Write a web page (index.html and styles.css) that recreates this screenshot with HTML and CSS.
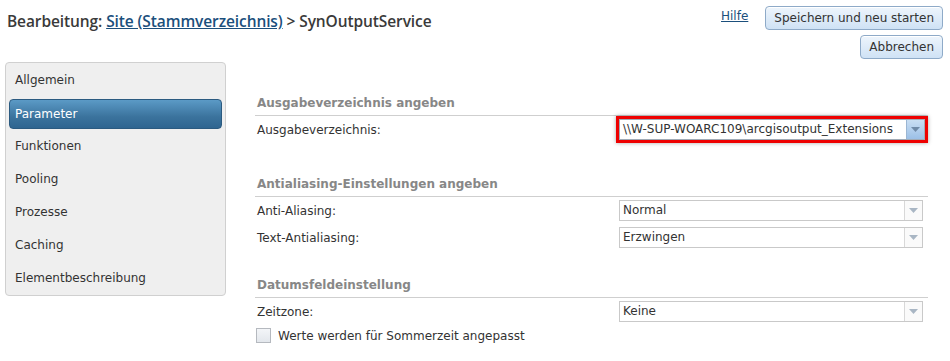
FILE: index.html
```html
<!DOCTYPE html>
<html lang="de">
<head>
<meta charset="utf-8">
<title>Bearbeitung</title>
<link rel="stylesheet" href="styles.css">
</head>
<body>
<header class="top">
  <h1 class="title">Bearbeitung: <a href="#" class="crumb">Site (Stammverzeichnis)</a> &gt; SynOutputService</h1>
  <div class="actions">
    <div class="actions-row">
      <a href="#" class="help">Hilfe</a>
      <button class="btn">Speichern und neu starten</button>
    </div>
    <div class="actions-row">
      <button class="btn">Abbrechen</button>
    </div>
  </div>
</header>
<div class="layout">
  <nav class="side">
    <div class="nav-item">Allgemein</div>
    <div class="nav-item active">Parameter</div>
    <div class="nav-item">Funktionen</div>
    <div class="nav-item">Pooling</div>
    <div class="nav-item">Prozesse</div>
    <div class="nav-item">Caching</div>
    <div class="nav-item">Elementbeschreibung</div>
  </nav>
  <main class="content">
    <section class="group first">
      <h2 class="group-title">Ausgabeverzeichnis angeben</h2>
      <div class="row">
        <span class="label">Ausgabeverzeichnis:</span>
        <div class="select combo">
          <span class="value">\\W-SUP-WOARC109\arcgisoutput_Extensions</span>
          <span class="arrow blue"><svg width="9" height="5" viewBox="0 0 9 5"><path d="M0 0H9L4.5 5Z" fill="#6f8aa8"/></svg></span>
        </div>
      </div>
    </section>
    <section class="group second">
      <h2 class="group-title">Antialiasing-Einstellungen angeben</h2>
      <div class="row">
        <span class="label">Anti-Aliasing:</span>
        <div class="select">
          <span class="value">Normal</span>
          <span class="arrow"><svg width="9" height="5" viewBox="0 0 9 5"><path d="M0 0H9L4.5 5Z" fill="#a9b6c4"/></svg></span>
        </div>
      </div>
      <div class="row">
        <span class="label">Text-Antialiasing:</span>
        <div class="select">
          <span class="value">Erzwingen</span>
          <span class="arrow"><svg width="9" height="5" viewBox="0 0 9 5"><path d="M0 0H9L4.5 5Z" fill="#a9b6c4"/></svg></span>
        </div>
      </div>
    </section>
    <section class="group">
      <h2 class="group-title">Datumsfeldeinstellung</h2>
      <div class="row">
        <span class="label">Zeitzone:</span>
        <div class="select">
          <span class="value">Keine</span>
          <span class="arrow"><svg width="9" height="5" viewBox="0 0 9 5"><path d="M0 0H9L4.5 5Z" fill="#a9b6c4"/></svg></span>
        </div>
      </div>
      <label class="check-row"><span class="checkbox"></span>Werte werden für Sommerzeit angepasst</label>
    </section>
  </main>
</div>
</body>
</html>
```
FILE: styles.css
```css
* { box-sizing: border-box; }
html, body { margin: 0; padding: 0; background: #fff; }
body {
  font-family: "DejaVu Sans", Verdana, sans-serif;
  font-size: 12px;
  color: #333;
  width: 950px;
  height: 361px;
  overflow: hidden;
}
.top {
  display: flex;
  justify-content: space-between;
  align-items: flex-start;
  padding: 6px 7px 0 7px;
}
.title {
  margin: 4px 0 0 0;
  font-family: "Open Sans", "Noto Sans", sans-serif;
  font-weight: 600;
  font-size: 15.5px;
  color: #3a3a3a;
  letter-spacing: -0.1px;
}
.crumb { color: #1b4f7c; text-decoration: underline; }
.actions { display: flex; flex-direction: column; align-items: flex-end; gap: 5px; }
.actions-row { display: flex; align-items: center; gap: 17px; }
.help {
  color: #1b4f7c;
  font-size: 12px;
  text-decoration: underline;
  margin-top: -4px;
}
.btn {
  font-family: "DejaVu Sans", Verdana, sans-serif;
  font-size: 12px;
  color: #333;
  height: 24px;
  padding: 0 8px;
  border: 1px solid #8eaac8;
  border-radius: 4px;
  background: linear-gradient(#eef5fc, #cfe2f5);
  box-shadow: inset 0 1px 0 #fff;
}
.layout {
  display: flex;
  gap: 29px;
  padding: 3px 0 0 5px;
}
.side {
  width: 221px;
  background: #efefef;
  border: 1px solid #d0d0d0;
  border-radius: 4px;
  padding: 1px 3px 0;
  display: flex;
  flex-direction: column;
  align-self: flex-start;
}
.nav-item {
  flex: 0 0 33px;
  height: 33px;
  line-height: 33px;
  padding-left: 6px;
  color: #333;
}
.nav-item.active {
  flex: 0 0 30px;
  height: 30px;
  line-height: 28px;
  margin: 2px 0 1px;
  color: #fff;
  background: linear-gradient(#5b9ac6, #3b739d 60%, #2f6590);
  border: 1px solid #2b5a80;
  border-radius: 4px;
  padding-left: 5px;
}
.content {
  width: 673px;
  padding-top: 34px;
}
.group.first { margin-bottom: 34px; }
.group.second { margin-bottom: 27px; }
.group-title {
  margin: 0;
  font-size: 12px;
  line-height: 14px;
  font-weight: bold;
  color: #878787;
  padding: 0 0 5px 2px;
  border-bottom: 1px solid #cfcfcf;
}
.row {
  display: flex;
  justify-content: space-between;
  align-items: center;
  padding-left: 2px;
  height: 27px;
}
.label { color: #333; }
.select {
  width: 304px;
  height: 21px;
  display: flex;
  border: 1px solid #c9c9c9;
  background: #fff;
  margin-right: 5px;
}
.value {
  flex: 1;
  padding-left: 3px;
  line-height: 19px;
  color: #333;
  white-space: nowrap;
  overflow: hidden;
}
.arrow {
  width: 18px;
  border-left: 1px solid #d8d8d8;
  display: flex;
  align-items: center;
  justify-content: center;
  background: #fafafa;
}
.arrow.blue {
  background: linear-gradient(#c9def3, #9cc0e7);
  border-left: 1px solid #9bb6d3;
}
.select.combo {
  width: 306px;
  margin-right: 3px;
  border-color: #a0aab5;
  box-shadow: 0 0 0 3px #ee0000, 0 0 4px 3px rgba(0,0,0,0.35);
}
.check-row {
  display: flex;
  align-items: center;
  gap: 7px;
  margin-top: 3px;
  padding-left: 1px;
  color: #333;
}
.checkbox {
  width: 15px;
  height: 15px;
  border: 1px solid #b5b9bf;
  background: linear-gradient(#f3f5f8, #e3e7ec);
  display: inline-block;
}
```
